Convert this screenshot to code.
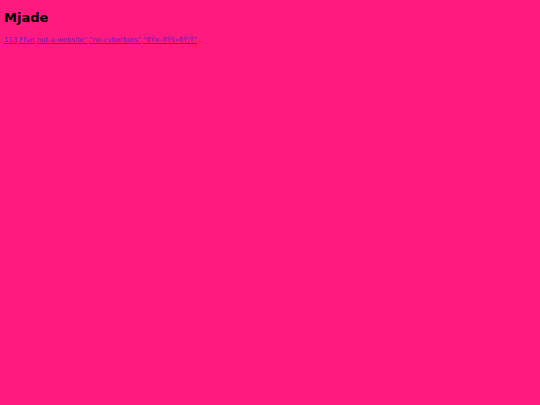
export default function App() {
  const tags = ["113", "Ffun", "not-a-website\"", "\"no-cyberbots\"", "\"ðŸ¤–ðŸš«ðŸ¦Ÿ\""];
  return (
    <div className="min-h-[405px] w-full bg-[#ff1a80] px-[4px] pt-[9px] font-['DejaVu_Sans',sans-serif] text-black">
      <h1 className="text-[13px] font-bold leading-[17px]">Mjade</h1>
      <p className="mt-[9px] text-[6.9px] leading-[10px]">
        {tags.map((t, i) => (
          <span key={i}>
            <a href="#" className="text-[#5a1ad0] underline">{t}</a>
            {i < tags.length - 1 ? " " : ""}
          </span>
        ))}
      </p>
    </div>
  );
}
